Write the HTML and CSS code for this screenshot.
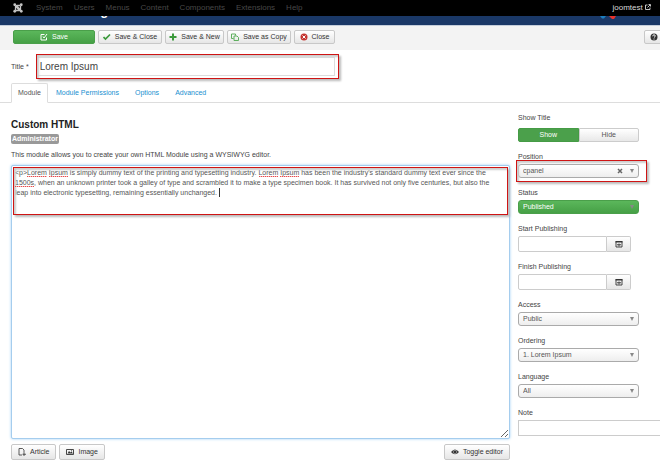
FILE: index.html
```html
<!DOCTYPE html>
<html lang="en">
<head>
    <meta charset="UTF-8">
    <meta name="viewport" content="width=device-width, initial-scale=1.0">
    <title>Module Manager</title>
    <link rel="stylesheet" href="styles.css">
</head>
<body>
    <nav class="navbar">
        <a class="brand" href="#" aria-label="Joomla">
            <svg width="10" height="10" viewBox="0 0 20 20" fill="none" stroke="#c4c4c4" stroke-width="2.6">
                <path d="M5 14V8q0-3 3-2l7 8M15 6v6q0 3-3 2L5 6M6 15h6q3 0 2-3M14 5H8Q5 5 6 8"/>
                <g fill="#c4c4c4" stroke="none"><circle cx="3.5" cy="3.5" r="2.8"/><circle cx="16.5" cy="3.5" r="2.8"/><circle cx="3.5" cy="16.5" r="2.8"/><circle cx="16.5" cy="16.5" r="2.8"/></g>
            </svg>
        </a>
        <a href="#">System</a>
        <a href="#">Users</a>
        <a href="#">Menus</a>
        <a href="#">Content</a>
        <a href="#">Components</a>
        <a href="#">Extensions</a>
        <a href="#">Help</a>
        <a class="site" href="#">joomtest
            <svg width="6" height="6" viewBox="0 0 12 12" fill="none" stroke="#d9d9d9" stroke-width="1.8"><path d="M5 2H1v9h9V7M5 7l5-5M7 1h4v4"/></svg>
        </a>
    </nav>
    <header class="header">
        <h1>Module Manager</h1>
        <svg class="logo" width="20" height="3" viewBox="0 0 20 3"><path d="M0 0h6L4 2.500H2z" fill="#1c7fc0"/><path d="M9 0h7l-2 3h-2z" fill="#e8332c"/></svg>
    </header>

    <div class="toolbar">
        <button type="button" class="btn btn-success">
            <svg width="8" height="8" viewBox="0 0 16 16" fill="none" stroke="#fff" stroke-width="2"><path d="M9 3H2v11h11V9M6 7l2 3 6-8"/></svg>Save</button>
        <button type="button" class="btn btn-close">
            <svg width="8" height="8" viewBox="0 0 16 16" fill="none" stroke="#3c9a3c" stroke-width="3.500"><path d="M1 8l4 4 9-9"/></svg>Save &amp; Close</button>
        <button type="button" class="btn btn-new">
            <svg width="8" height="8" viewBox="0 0 16 16" fill="none" stroke="#3c9a3c" stroke-width="4"><path d="M8 1v14M1 8h14"/></svg>Save &amp; New</button>
        <button type="button" class="btn btn-copy">
            <svg width="8" height="8" viewBox="0 0 16 16" fill="none" stroke="#4fa84f" stroke-width="1.800"><path d="M5 11H1V2h8v3M6 6h6l3 3v6H6z"/></svg>Save as Copy</button>
        <button type="button" class="btn btn-cancel">
            <svg width="8" height="8" viewBox="0 0 16 16"><circle cx="8" cy="8" r="7" fill="#c43531"/><path d="M5 5l6 6M11 5l-6 6" stroke="#fff" stroke-width="2"/></svg>Close</button>
        <button type="button" class="btn btn-help" aria-label="Help">
            <svg width="8" height="8" viewBox="0 0 16 16"><circle cx="8" cy="8" r="7" fill="#333"/><path d="M5.500 6.500q0-3 2.500-3t2.500 2.500q0 1.500-2.500 3M8 11v2" fill="none" stroke="#fff" stroke-width="1.800"/></svg></button>
    </div>

    <form>
        <div class="title-row">
            <label for="title">Title *</label>
            <div class="title-field">
                <input type="text" id="title" value="Lorem Ipsum">
                <span class="mark mark-title"></span>
            </div>
        </div>

        <div class="tabs">
            <a class="active" href="#">Module</a>
            <a href="#">Module Permissions</a>
            <a href="#">Options</a>
            <a href="#">Advanced</a>
        </div>

        <div class="content">
            <div class="main">
                <h2>Custom HTML</h2>
                <span class="badge">Administrator</span>
                <label class="desc" for="editor">This module allows you to create your own HTML Module using a WYSIWYG editor.</label>
                <div class="editor">
                    <textarea id="editor" spellcheck="false">&lt;p&gt;Lorem Ipsum is simply dummy text of the printing and typesetting industry. Lorem Ipsum has been the industry's standard dummy text ever since the 1500s, when an unknown printer took a galley of type and scrambled it to make a type specimen book. It has survived not only five centuries, but also the leap into electronic typesetting, remaining essentially unchanged.</textarea>
                    <span class="mark mark-editor"></span>
                    <span class="squiggle s1"></span>
                    <span class="squiggle s2"></span>
                    <span class="squiggle s3"></span>
                    <span class="squiggle s4"></span>
                    <span class="squiggle s5"></span>
                    <span class="caret"></span>
                </div>
                <div class="editor-buttons">
                    <button type="button" class="btn">
                        <svg width="8" height="8" viewBox="0 0 16 16" fill="none" stroke="#333" stroke-width="1.600"><path d="M8 14H2V1h7l3 3v5M12 9v7M9 12.500h7"/></svg>Article</button>
                    <button type="button" class="btn">
                        <svg width="8" height="8" viewBox="0 0 16 16"><path d="M1 3h14v10H1z" fill="none" stroke="#333" stroke-width="1.800"/><path d="M3 11l3-5 3 3 2-2 3 4z" fill="#333"/><circle cx="11" cy="5.500" r="1.200" fill="#333"/></svg>Image</button>
                    <button type="button" class="btn toggle">
                        <svg width="8" height="8" viewBox="0 0 16 16"><path d="M0 8q8-10 16 0-8 9-16 0z" fill="#333"/><circle cx="8" cy="8" r="3.500" fill="none" stroke="#ddd"/></svg>Toggle editor</button>
                </div>
            </div>

            <div class="sidebar">
                <div class="group">
                    <span class="caption" id="show-title">Show Title</span>
                    <div class="switch" role="group" aria-labelledby="show-title">
                        <button type="button" class="on">Show</button>
                        <button type="button">Hide</button>
                    </div>
                </div>
                <div class="group">
                    <label for="position">Position</label>
                    <div class="select">
                        <select id="position"><option>cpanel</option></select>
                        <svg class="clear" width="6" height="6" viewBox="0 0 12 12" stroke="#666" stroke-width="3"><path d="M2 2l8 8M10 2l-8 8"/></svg>
                        <span class="mark mark-position"></span>
                    </div>
                </div>
                <div class="group">
                    <label for="status">Status</label>
                    <div class="select green">
                        <select id="status"><option>Published</option></select>
                    </div>
                </div>
                <div class="group">
                    <label for="start">Start Publishing</label>
                    <div class="date-field">
                        <input type="text" id="start">
                        <button type="button" aria-label="Open calendar">
                            <svg width="8" height="8" viewBox="0 0 16 16"><path d="M2 3h12v11H2z" fill="none" stroke="#333" stroke-width="1.800"/><path d="M1 2h14v3H1z" fill="#333"/><path d="M8 7v6M4 9.500h8" stroke="#444" stroke-width="2"/></svg>
                        </button>
                    </div>
                </div>
                <div class="group">
                    <label for="finish">Finish Publishing</label>
                    <div class="date-field">
                        <input type="text" id="finish">
                        <button type="button" aria-label="Open calendar">
                            <svg width="8" height="8" viewBox="0 0 16 16"><path d="M2 3h12v11H2z" fill="none" stroke="#333" stroke-width="1.800"/><path d="M1 2h14v3H1z" fill="#333"/><path d="M8 7v6M4 9.500h8" stroke="#444" stroke-width="2"/></svg>
                        </button>
                    </div>
                </div>
                <div class="group">
                    <label for="access">Access</label>
                    <div class="select"><select id="access"><option>Public</option></select></div>
                </div>
                <div class="group">
                    <label for="ordering">Ordering</label>
                    <div class="select"><select id="ordering"><option>1. Lorem Ipsum</option></select></div>
                </div>
                <div class="group">
                    <label for="language">Language</label>
                    <div class="select"><select id="language"><option>All</option></select></div>
                </div>
                <div class="group">
                    <label for="note">Note</label>
                    <input type="text" id="note" class="note">
                </div>
            </div>
        </div>
    </form>
</body>
</html>
```

FILE: styles.css
```css
* {
    box-sizing: border-box;
}

body {
    margin: 0;
    overflow-x: hidden;
    background-color: #fff;
    color: #444;
    font-family: "Liberation Sans", Arial, sans-serif;
    font-size: 7px;
    line-height: 10px;
}

input, select, textarea, button {
    margin: 0;
    color: #555;
    font-family: inherit;
    font-size: 7px;
    line-height: 10px;
}

a {
    color: #1a8fd0;
    text-decoration: none;
}

svg {
    flex: none;
}

/* top menu */
.navbar {
    display: flex;
    align-items: center;
    gap: 11px;
    height: 16px;
    padding: 0 9px 0 13px;
    background-color: #000;
    font-size: 8px;
}

.navbar a {
    color: #484848;
}

.navbar .brand {
    display: flex;
    margin-right: 2px;
}

.navbar .site {
    margin-left: auto;
    color: #d9d9d9;
}

.header {
    display: flex;
    justify-content: space-between;
    height: 9px;
    padding: 0 40px 0 18px;
    overflow: hidden;
    background-color: #1a3867;
}

.header h1 {
    margin: -13px 0 0;
    color: #fff;
    font-size: 13px;
    line-height: 16px;
}

/* toolbar */
.toolbar {
    display: flex;
    gap: 3px;
    height: 25px;
    padding: 4px 0 6px 13px;
    border-top: 1px solid #c5cedb;
    background-color: #f3f3f3;
    overflow: hidden;
}

.btn {
    display: flex;
    flex: none;
    align-items: center;
    justify-content: center;
    gap: 4px;
    padding: 0 6px;
    border: 1px solid #c8c8c8;
    border-radius: 2px;
    background: linear-gradient(#fff, #e6e6e6);
    color: #333;
    white-space: nowrap;
}

.toolbar .btn {
    padding: 0 2px;
}

.toolbar .btn-success {
    width: 82px;
    border-color: #4a9f4a;
    background: linear-gradient(#5bb75b, #46a046);
    color: #fff;
}

.btn-close {
    width: 64px;
}

.btn-new {
    width: 59px;
}

.btn-copy {
    width: 64px;
}

.btn-cancel {
    width: 41px;
}

.toolbar .btn-help {
    justify-content: flex-start;
    width: 40px;
    margin-left: auto;
    margin-right: -24px;
    padding: 0 5px;
}

/* title */
.title-row {
    display: flex;
    align-items: center;
    gap: 8px;
    height: 33px;
    padding-left: 11px;
}

.title-field {
    position: relative;
    width: 298px;
}

.title-field input {
    display: block;
    width: 100%;
    height: 19px;
    padding: 0 2px;
    border: 1px solid #ddd;
    color: #444;
    font-size: 10px;
}

/* red frames laid over the fields */
.mark {
    position: absolute;
    border: 1px solid #cf1414;
    box-shadow: 2px 2px 2px #bbb, inset 2px 2px 2px #ccc;
    pointer-events: none;
}

.mark-title {
    inset: -3px -4px -3px -1px;
}

.mark-editor {
    inset: 2px 2px auto 2px;
    height: 48px;
}

.mark-position {
    inset: -4px -8px -4px -2px;
}

.tabs {
    display: flex;
    height: 20px;
    padding-left: 11px;
    border-bottom: 1px solid #ddd;
}

.tabs a {
    height: 20px;
    padding: 5px 8px;
}

.tabs .active {
    padding: 4px 6px;
    border: 1px solid #ddd;
    border-bottom-color: #fff;
    border-radius: 2px 2px 0 0;
    background-color: #fff;
    color: #555;
}

.content {
    display: flex;
    gap: 8px;
    padding: 10px 0 0 11px;
}

.main {
    flex: 1;
    min-width: 0;
}

.main h2 {
    margin: 5px 0 3px;
    color: #222;
    font-size: 10px;
    line-height: 13px;
}

.badge {
    display: block;
    width: max-content;
    padding: 0 1px;
    border-radius: 2px;
    background-color: #999;
    color: #fff;
    font-weight: bold;
}

.desc {
    display: block;
    margin: 6px 0 5px;
}

.editor {
    position: relative;
}

.editor textarea {
    display: block;
    width: 100%;
    height: 274px;
    padding: 2px 8px 2px 3px;
    border: 1px solid #a5cdee;
    border-radius: 2px;
    box-shadow: 0 0 3px #9fd0f5;
    outline: none;
}

.squiggle {
    position: absolute;
    top: 11px;
    height: 1px;
    background: repeating-linear-gradient(90deg, #e05050 0 1px, #fbb 1px 2px);
}

.s1 {
    left: 16px;
    width: 20px;
}

.s2 {
    left: 38px;
    width: 19px;
}

.s3 {
    left: 248px;
    width: 19px;
}

.s4 {
    left: 269px;
    width: 19px;
}

.s5 {
    top: 21px;
    left: 4px;
    width: 19px;
}

.caret {
    position: absolute;
    top: 23px;
    left: 208px;
    width: 1px;
    height: 9px;
    background-color: #333;
}

.editor-buttons {
    display: flex;
    gap: 3px;
    margin-top: 5px;
}

.editor-buttons .btn {
    height: 16px;
}

.editor-buttons .toggle {
    margin-left: auto;
}

/* right column */
.sidebar {
    flex: 0 0 142px;
}

.group {
    margin-bottom: 10px;
}

.group label,
.caption {
    display: block;
    margin-bottom: 2px;
}

.group .caption {
    margin-bottom: 5px;
}

.switch {
    display: flex;
    width: 121px;
    height: 14px;
}

.switch button {
    flex: 1;
    padding: 0;
    border: 1px solid #ccc;
    border-radius: 0 2px 2px 0;
    background: linear-gradient(#fff, #e8e8e8);
}

.switch .on {
    border-color: #459b45;
    border-radius: 2px 0 0 2px;
    background: #4ba04b;
    color: #fff;
}

.select {
    position: relative;
    width: 121px;
}

.select select {
    display: block;
    width: 100%;
    height: 14px;
    padding: 0 4px;
    border: 1px solid #aaa;
    border-radius: 3px;
    background: linear-gradient(#fff, #eee);
    appearance: none;
}

.select::after {
    content: "";
    position: absolute;
    top: 5px;
    right: 5px;
    border: 2px solid transparent;
    border-top: 4px solid #888;
    border-bottom: 0;
}

.select .clear {
    position: absolute;
    top: 4px;
    right: 16px;
}

.select.green select {
    border-color: #4a9f4a;
    background: linear-gradient(#5bb75b, #46a046);
    color: #fff;
}

.date-field {
    display: flex;
    width: 113px;
    height: 16px;
}

.date-field input {
    flex: 1;
    min-width: 0;
    border: 1px solid #ccc;
    border-radius: 2px 0 0 2px;
}

.date-field button {
    display: flex;
    align-items: center;
    justify-content: center;
    width: 24px;
    padding: 0;
    border: 1px solid #ccc;
    border-left: 0;
    border-radius: 0 2px 2px 0;
    background: linear-gradient(#fff, #e6e6e6);
}

.note {
    display: block;
    width: 100%;
    height: 16px;
    border: 1px solid #ccc;
    border-right: 0;
}
```
